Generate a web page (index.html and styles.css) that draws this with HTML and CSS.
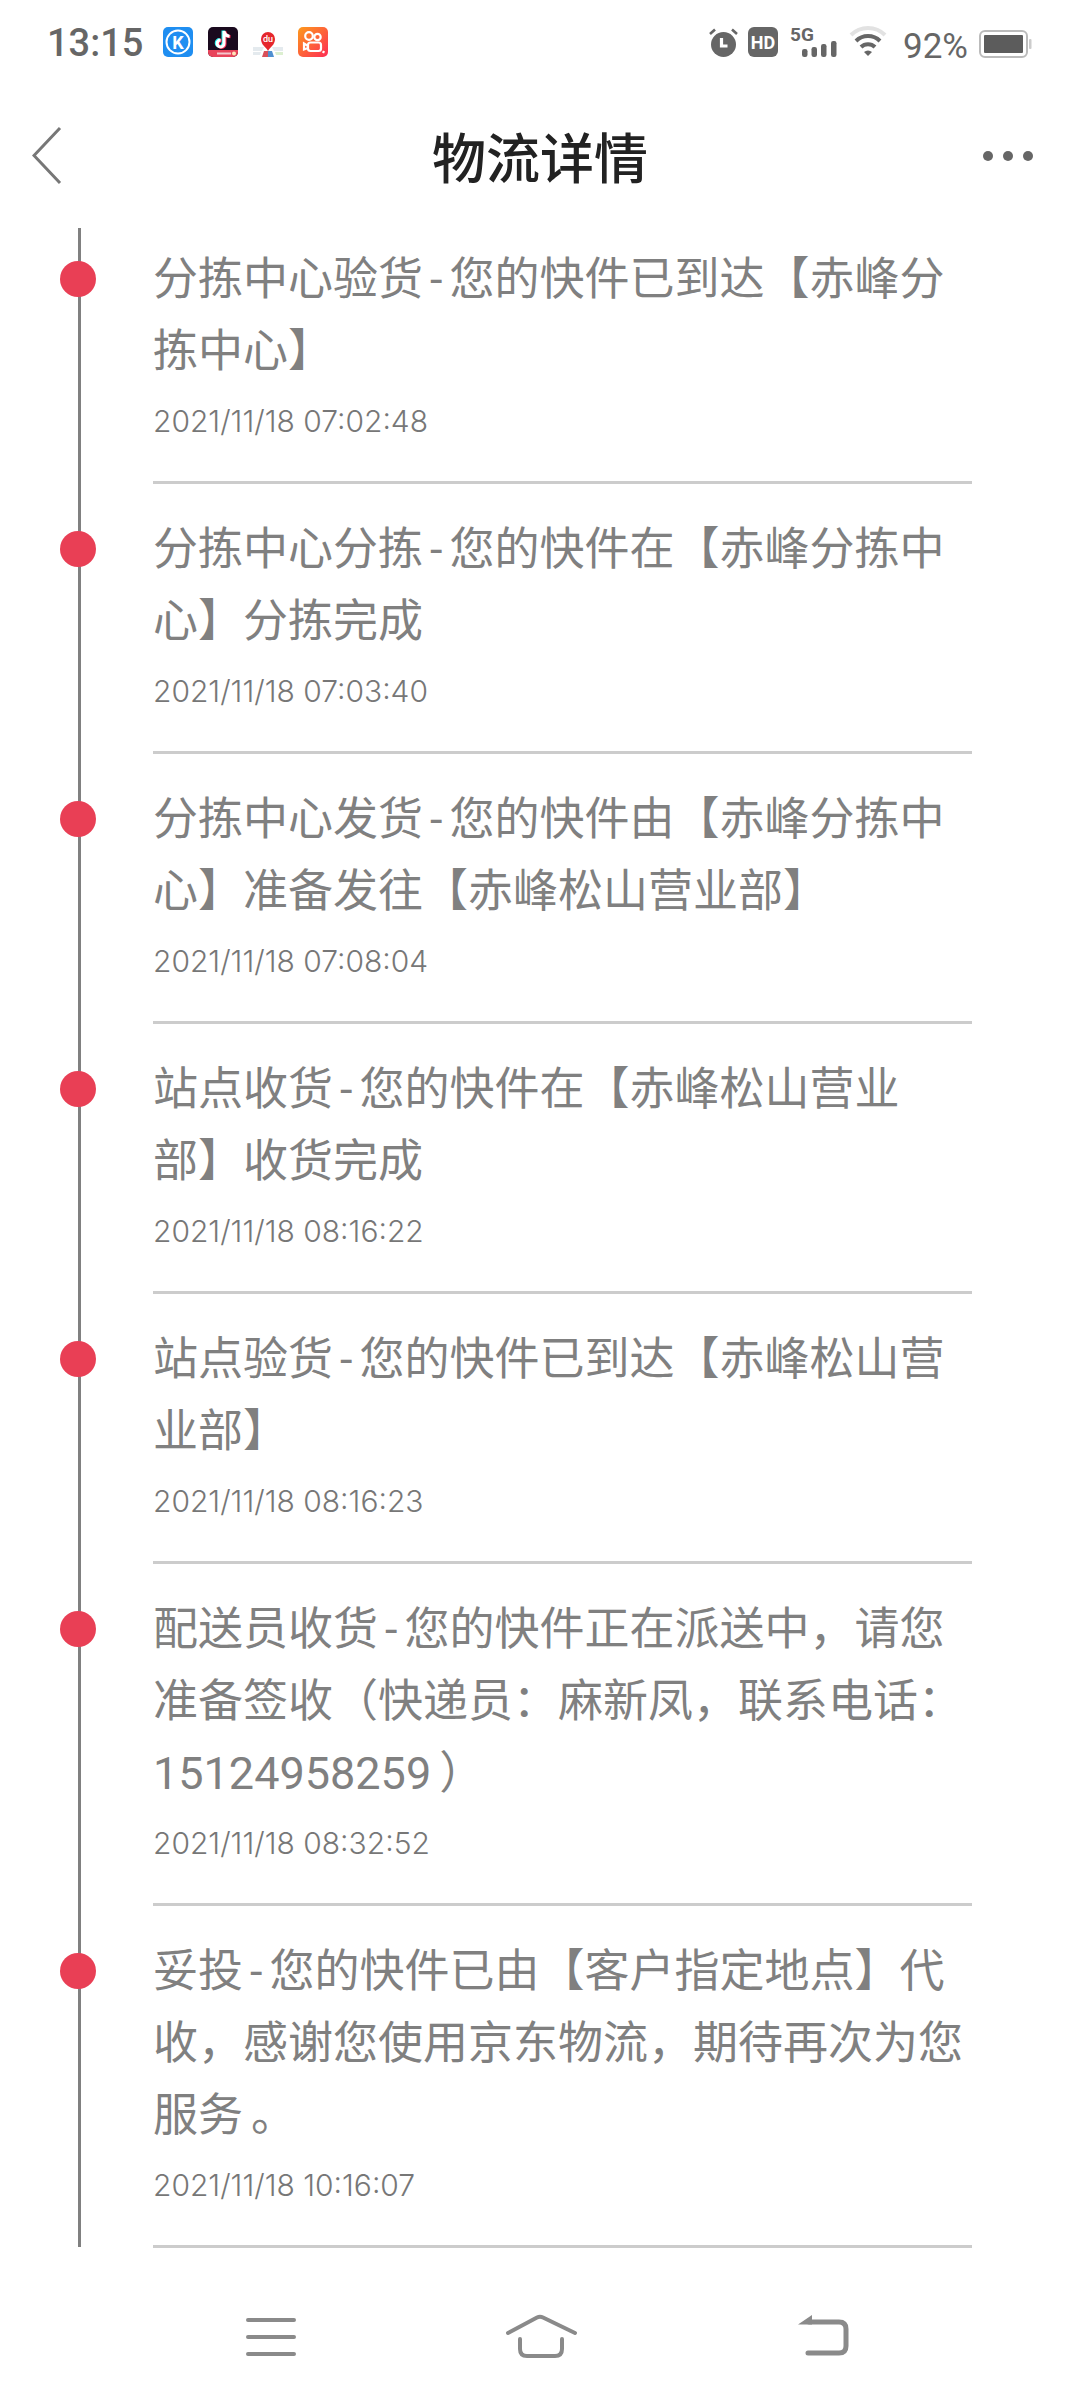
FILE: index.html
```html
<!DOCTYPE html>
<html lang="zh-CN">
<head>
<meta charset="utf-8">
<title>物流详情</title>
<link rel="stylesheet" href="styles.css">
</head>
<body>
<div class="page">
  <header class="status">
    <span class="time">13:15</span>
    <svg class="app" viewBox="0 0 30 30"><rect width="30" height="30" rx="5" fill="#1f8ef1"/><circle cx="15" cy="15" r="11.5" fill="none" stroke="#fff" stroke-width="2"/><text x="15" y="21.5" class="g-k">K</text></svg>
    <svg class="app" viewBox="0 0 30 30"><rect width="30" height="30" rx="5" fill="#1a0a1e"/><path d="M0 23h30v2a5 5 0 0 1-5 5H5a5 5 0 0 1-5-5z" fill="#e8435a"/><path d="M9 25.5h14v2H9z" fill="#f4c6cc"/><circle cx="26" cy="26.5" r="2" fill="#ffe2b8"/><path d="M15 3.5v12.5a3.4 3.4 0 1 1-3.4-3.4M15 3.5c.4 3 2.4 5 5.5 5.3" fill="none" stroke="#25f4ee" stroke-width="3"/><path d="M17 4.500v12.500a3.400 3.400 0 1 1-3.400-3.400M17 4.500c.4 3 2.400 5 5.500 5.300" fill="none" stroke="#fe2c55" stroke-width="3"/><path d="M16 4v12.500a3.400 3.400 0 1 1-3.400-3.400M16 4c.4 3 2.400 5 5.500 5.300" fill="none" stroke="#fff" stroke-width="3"/></svg>
    <svg class="app" viewBox="0 0 30 30"><path d="M0 20h11l-2 4H0zM0 25h8l-1 3H0z" fill="#e4eaee"/><path d="M30 20H19l2 4h9z" fill="#e4eaee"/><path d="M30 25h-8l1 3h7z" fill="#dcefd0"/><path d="M15 24h4l2 6h-6z" fill="#4f8fd0"/><path d="M11 24h4v6H9z" fill="#d9505a"/><path d="M15 24c-2-4-7-6-7-12a7 7 0 0 1 14 0c0 6-5 8-7 12z" fill="#e5262c"/><text x="15" y="14.500" class="g-du">du</text></svg>
    <svg class="app" viewBox="0 0 30 30"><defs><linearGradient id="ks" x1="0" y1="0" x2="1" y2="1"><stop offset="0" stop-color="#fd9a1c"/><stop offset="1" stop-color="#fe2c55"/></linearGradient></defs><rect width="30" height="30" rx="5" fill="url(#ks)"/><g fill="none" stroke="#fff" stroke-width="2.2"><circle cx="11" cy="9" r="3.800"/><circle cx="19.500" cy="10" r="3.200"/><rect x="10" y="15.500" width="13" height="8.500" rx="2.500"/><path d="M10 19l-4-2.500v6L10 21"/><path d="M26 24l-1 2"/></g></svg>
    <span class="spacer"></span>
    <svg class="ind alarm" viewBox="0 0 29 30"><circle cx="14.500" cy="17.500" r="12.500" fill="#666"/><path d="M1 7l5-4.500M28 7l-5-4.500" stroke="#666" stroke-width="2.600"/><path d="M12.500 11v8h6" fill="none" stroke="#fff" stroke-width="3.200"/></svg>
    <svg class="ind hd" viewBox="0 0 30 30"><rect width="30" height="30" rx="6" fill="#666"/><text x="15" y="21.500" class="g-hd">HD</text></svg>
    <svg class="ind sig" viewBox="0 0 47 30"><text x="0" y="14" class="g-5g">5G</text><rect x="12" y="22" width="5.500" height="8" rx="2.200" fill="#666"/><rect x="21.500" y="20" width="5.500" height="10" rx="2.200" fill="#666"/><rect x="31" y="17" width="5.500" height="13" rx="2.200" fill="#666"/><rect x="41" y="14" width="5.500" height="16" rx="2.200" fill="#666"/></svg>
    <svg class="ind wifi" viewBox="0 0 36 30"><path d="M1 8a24 24 0 0 1 34 0" fill="none" stroke="#e2e2e2" stroke-width="4"/><path d="M6 14a17 17 0 0 1 24 0" fill="none" stroke="#666" stroke-width="4"/><path d="M11 20a10 10 0 0 1 14 0" fill="none" stroke="#666" stroke-width="4"/><path d="M14 25a6 6 0 0 1 8 0l-4 4z" fill="#666"/></svg>
    <span class="pct">92%</span>
    <svg class="ind batt" viewBox="0 0 53 28"><rect x="1" y="1" width="47" height="26" rx="5" fill="none" stroke="#bbb" stroke-width="2"/><rect x="5" y="5" width="39" height="18" rx="1" fill="#5c5c5c"/><rect x="50" y="9" width="2.500" height="10" rx="1" fill="#ccc"/></svg>
  </header>

  <nav class="bar">
    <svg class="back" viewBox="0 0 30 60"><path d="M28 2L2 29.500l26 27.500" fill="none" stroke="#777" stroke-width="3"/></svg>
    <h1 class="title">物流详情</h1>
    <div class="more"><i></i><i></i><i></i></div>
  </nav>

  <main class="list">
    <div class="rail"></div>
    <article class="item">
      <p class="msg">分拣中心验货<span class="dash">-</span>您的快件已到达【赤峰分拣中心】</p>
      <time class="date">2021/11/18 07:02:48</time>
    </article>
    <article class="item">
      <p class="msg">分拣中心分拣<span class="dash">-</span>您的快件在【赤峰分拣中心】分拣完成</p>
      <time class="date">2021/11/18 07:03:40</time>
    </article>
    <article class="item">
      <p class="msg">分拣中心发货<span class="dash">-</span>您的快件由【赤峰分拣中心】准备发往【赤峰松山营业部】</p>
      <time class="date">2021/11/18 07:08:04</time>
    </article>
    <article class="item">
      <p class="msg">站点收货<span class="dash">-</span>您的快件在【赤峰松山营业部】收货完成</p>
      <time class="date">2021/11/18 08:16:22</time>
    </article>
    <article class="item">
      <p class="msg">站点验货<span class="dash">-</span>您的快件已到达【赤峰松山营业部】</p>
      <time class="date">2021/11/18 08:16:23</time>
    </article>
    <article class="item">
      <p class="msg">配送员收货<span class="dash">-</span>您的快件正在派送中，请您准备签收（快递员：麻新凤，联系电话：15124958259<span class="nudge">）</span></p>
      <time class="date">2021/11/18 08:32:52</time>
    </article>
    <article class="item">
      <p class="msg">妥投<span class="dash">-</span>您的快件已由【客户指定地点】代收，感谢您使用京东物流，期待再次为您服务<span class="nudge">。</span></p>
      <time class="date">2021/11/18 10:16:07</time>
    </article>
  </main>

  <footer class="keys">
    <svg class="key" viewBox="0 0 90 60"><path d="M22 14h46M22 31h46M22 48h46" fill="none" stroke="#8a8a8a" stroke-width="4" stroke-linecap="round"/></svg>
    <svg class="key key-home" viewBox="0 0 90 60"><path d="M13 27L42 11.500q3-1.500 6 0L80 27M25 33v10q0 7 7 7h28q7 0 7-7V33" fill="none" stroke="#8a8a8a" stroke-width="4" stroke-linecap="round"/></svg>
    <svg class="key key-ret" viewBox="0 0 90 60"><path d="M29 47h31q7 0 7-7V23q0-7-7-7H30" fill="none" stroke="#8a8a8a" stroke-width="5" stroke-linecap="round"/><path d="M19 18.500L33 9v9.500z" fill="#8a8a8a"/></svg>
  </footer>
</div>
</body>
</html>
```
FILE: styles.css
```css
* { box-sizing: border-box; }
html, body { margin: 0; padding: 0; background: #fff; }
body { font-family: "Noto Sans CJK SC", "Noto Sans", sans-serif; }
.page { width: 1080px; height: 2400px; display: flex; flex-direction: column; overflow: hidden; }

.status { height: 84px; padding: 28px 48px 0 47px; display: flex; align-items: flex-start; }
.time { font: 500 38px/30px Roboto, sans-serif; color: #666; width: 116px; }
.app { width: 30px; height: 30px; margin: -1px 15px 0 0; }
.spacer { flex: 1; }
.ind { height: 30px; display: block; margin-top: -1px; overflow: visible; }
.alarm { width: 29px; margin-right: 10px; }
.hd { width: 30px; margin-right: 12px; }
.sig { width: 47px; margin-right: 13px; }
.wifi { width: 36px; margin-right: 17px; }
.pct { font: 400 35px/30px Roboto, sans-serif; color: #666; margin: 4px 11px 0 0; }
.batt { width: 53px; height: 28px; margin-top: 2px; }
.g-k { font: 700 18px Roboto, sans-serif; fill: #fff; text-anchor: middle; }
.g-du { font: 500 9px Roboto, sans-serif; fill: #fff; text-anchor: middle; }
.g-hd { font: 700 18px Roboto, sans-serif; fill: #fff; text-anchor: middle; }
.g-5g { font: 700 19px Roboto, sans-serif; fill: #666; }

.bar { height: 144px; flex: none; display: flex; align-items: center; justify-content: space-between; padding: 0 47px 0 32px; position: relative; }
.back { width: 30px; height: 60px; }
.title { margin: 0; font-size: 54px; line-height: 72px; font-weight: 500; color: #222; position: absolute; left: 0; right: 0; text-align: center; }
.more { display: flex; gap: 10px; }
.more i { width: 10px; height: 10px; border-radius: 50%; background: #666; }

.list { flex: 1; position: relative; padding-left: 153px; padding-right: 108px; }
.rail { position: absolute; left: 78px; top: 0; width: 3px; height: 2019px; background: #808080; }
.item { position: relative; padding: 30px 0 39px; border-bottom: 3px solid #ccc; }
.item:first-of-type { padding-top: 16px; }
.item::before { content: ""; position: absolute; left: -93px; width: 36px; height: 36px; border-radius: 50%; background: #e93f55; margin-top: 17px; }
.msg { margin: 0; padding-right: 8px; font-family: Roboto, "Noto Sans CJK SC", sans-serif; font-size: 45px; line-height: 72px; color: #808080; }
.dash { margin: 0 7px; }
.nudge { padding-left: 8px; margin-right: -8px; }
.date { display: block; margin-top: 12px; font: 300 30px/42px Inter, sans-serif; color: #777; }

.keys { height: 128px; flex: none; display: flex; align-items: center; padding-left: 226px; }
.key { width: 90px; height: 60px; }
.key-home { margin-left: 179px; }
.key-ret { margin-left: 194px; }
```
